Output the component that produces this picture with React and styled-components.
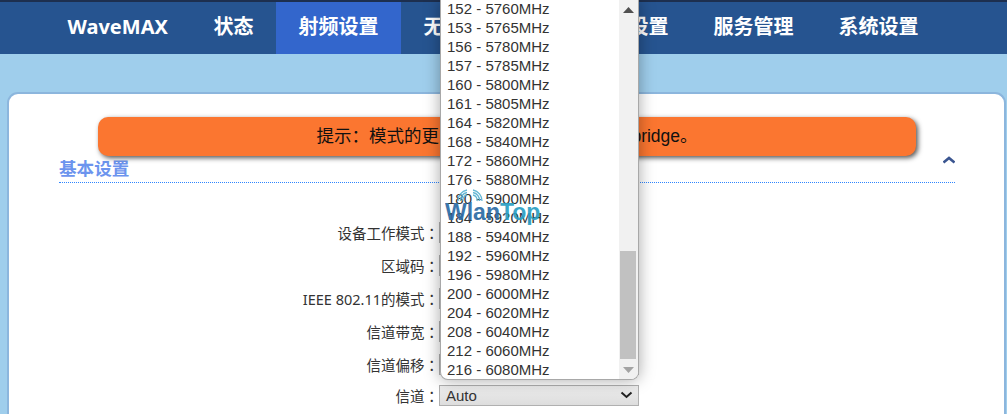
import React from 'react';
import styled, { createGlobalStyle } from 'styled-components';

const Global = createGlobalStyle`
   html, body {
      margin: 0;
      padding: 0;
      height: 100%;
      overflow: hidden;
      background: #9fceec;
   }
`;

const Page = styled.div`
   position: relative;
   width: 1007px;
   height: 414px;
   overflow: hidden;
   font-family: "Noto Sans", "Noto Sans CJK SC", sans-serif;
`;

const Navbar = styled.div`
   height: 52px;
   border-top: 2px solid #1d2f4f;
   padding-left: 45px;
   display: flex;
   background: #265490;
`;

const NavItem = styled.div`
   padding: 0 22.5px;
   line-height: 50px;
   font-size: 20px;
   font-weight: bold;
   color: #fff;
   white-space: nowrap;
   background: ${props => props.$active ? '#3366cc' : 'transparent'};
`;

const Brand = styled(NavItem)`
   width: 101px;
`;

const Card = styled.div`
   margin: 38px 1px 0 7px;
   height: 340px;
   box-sizing: border-box;
   padding: 61px 49px 0 50px;
   background: #fff;
   border: 2px solid #8cb6dd;
   border-bottom: 0;
   border-radius: 11px 11px 0 0;
`;

const SectionHead = styled.div`
   height: 27px;
   display: flex;
   justify-content: space-between;
   border-bottom: 1px dotted #2f86ff;
`;

const SectionTitle = styled.div`
   font-size: 17.6px;
   font-weight: bold;
   line-height: 26px;
   color: #6c94ee;
`;

const Collapse = styled.svg`
   width: 12px;
   height: 8px;
   margin-top: 1px;
`;

const Form = styled.div`
   padding-top: 33px;
   display: flex;
   flex-direction: column;
`;

const Row = styled.div`
   height: ${props => props.$last ? '28px' : '33px'};
   display: grid;
   grid-template-columns: 380px 200px;
   align-items: center;
`;

const Label = styled.div`
   font-size: 14.5px;
   text-align: right;
   color: #333;
   white-space: nowrap;
`;

const Colon = styled.span`
   font-family: "Noto Sans CJK TC", sans-serif;
`;

const SelectBox = styled.div`
   height: 21px;
   box-sizing: border-box;
   padding: 0 5px 0 6px;
   display: flex;
   align-items: center;
   justify-content: space-between;
   border: 1px solid #b0b0b0;
   background: linear-gradient(#eee, #ddd);
   font-family: "Liberation Sans", sans-serif;
   font-size: 15px;
   color: #333;
`;

const Notice = styled.div`
   position: absolute;
   left: 98px;
   top: 117px;
   width: 818px;
   height: 39px;
   line-height: 39px;
   text-align: center;
   font-family: "Liberation Sans", "Noto Sans CJK SC", sans-serif;
   font-size: 17.5px;
   color: #111;
   background: #fb7630;
   border-radius: 10px;
   box-shadow: 2px 2px 5px #555;
`;

const Dropdown = styled.div`
   position: absolute;
   left: 440px;
   top: 0;
   width: 199px;
   height: 380px;
   box-sizing: border-box;
   display: flex;
   overflow: hidden;
   background: #fff;
   border: 1px solid #a8a8a8;
   border-top: 0;
   border-radius: 0 0 8px 8px;
   box-shadow: 0 0 16px rgba(0,0,0,.35);
`;

const OptionList = styled.div`
   flex: 1;
   margin-top: -1px;
   font-family: "Liberation Sans", sans-serif;
   font-size: 15px;
   color: #333;
`;

const Option = styled.div`
   height: 19px;
   line-height: 19px;
   padding-left: 6px;
   white-space: nowrap;
`;

const Scrollbar = styled.div`
   width: 19px;
   display: flex;
   flex-direction: column;
   align-items: center;
   background: #f1f1f1;
`;

const ScrollArrow = styled.div`
   height: 19px;
   display: flex;
   align-items: center;
   justify-content: center;
`;

const Track = styled.div`
   flex: 1;
   width: 100%;
   padding-top: 232px;
   padding-bottom: 1px;
   box-sizing: border-box;
   display: flex;
`;

const Thumb = styled.div`
   flex: 1;
   margin: 0 2px 0 1px;
   background: #c1c1c1;
`;

const Watermark = styled.div`
   position: absolute;
   left: 445px;
   top: 189px;
   width: 98px;
   font-family: "Liberation Sans", sans-serif;
   font-size: 23px;
   font-weight: bold;
   line-height: 20px;
   white-space: nowrap;
   opacity: .92;
`;

const WaveIcon = styled.svg`
   display: block;
   width: 26px;
   height: 13px;
   margin-left: 12px;
`;

const Wlan = styled.span`
   color: #2c6ca6;
`;

const Top = styled.span`
   color: #2a9fc4;
`;

const channels = [
   [152, 5760], [153, 5765], [156, 5780], [157, 5785], [160, 5800],
   [161, 5805], [164, 5820], [168, 5840], [172, 5860], [176, 5880],
   [180, 5900], [184, 5920], [188, 5940], [192, 5960], [196, 5980],
   [200, 6000], [204, 6020], [208, 6040], [212, 6060], [216, 6080],
];

const fields = ['设备工作模式', '区域码', 'IEEE 802.11的模式', '信道带宽', '信道偏移'];

function Chevron() {
   return (
      <svg width="13" height="8" viewBox="0 0 13 8">
         <path d="M1.5 1.5 L6.5 6 L11.5 1.5" fill="none" stroke="#222" strokeWidth="2" />
      </svg>
   );
}

export default function App() {
   return (
      <Page>
         <Global />
         <Navbar>
            <Brand>WaveMAX</Brand>
            <NavItem>状态</NavItem>
            <NavItem $active>射频设置</NavItem>
            <NavItem>无线设置</NavItem>
            <NavItem>网络接口设置</NavItem>
            <NavItem>服务管理</NavItem>
            <NavItem>系统设置</NavItem>
         </Navbar>
         <Card>
            <SectionHead>
               <SectionTitle>基本设置</SectionTitle>
               <Collapse viewBox="0 0 12 8">
                  <path d="M.5 6.5 L6 2 L11.5 6.5" fill="none" stroke="#3a5590" strokeWidth="2.6" />
               </Collapse>
            </SectionHead>
            <Form>
               {fields.map(f => (
                  <Row key={f}>
                     <Label>{f}<Colon>：</Colon></Label>
                     <SelectBox />
                  </Row>
               ))}
               <Row $last>
                  <Label>信道<Colon>：</Colon></Label>
                  <SelectBox>
                     Auto
                     <Chevron />
                  </SelectBox>
               </Row>
            </Form>
         </Card>
         <Notice>提示：模式的更改将重置配置，默认模式bridge。</Notice>
         <Dropdown>
            <OptionList>
               {channels.map(([ch, mhz]) => (
                  <Option key={ch}>{ch} - {mhz}MHz</Option>
               ))}
            </OptionList>
            <Scrollbar>
               <ScrollArrow>
                  <svg width="11" height="6" viewBox="0 0 11 6"><path d="M0 6 L5.5 0 L11 6 Z" fill="#505050" /></svg>
               </ScrollArrow>
               <Track><Thumb /></Track>
               <ScrollArrow>
                  <svg width="11" height="6" viewBox="0 0 11 6"><path d="M0 0 L5.5 6 L11 0 Z" fill="#a3a3a3" /></svg>
               </ScrollArrow>
            </Scrollbar>
         </Dropdown>
         <Watermark>
            <WaveIcon viewBox="0 0 26 13" fill="none" stroke="#58b2d2" strokeWidth="1.3">
               <path d="M6 12 A5 5 0 0 1 10 6" />
               <path d="M3.5 12 A8 8 0 0 1 10 3.5" />
               <path d="M1 12 A11 11 0 0 1 10 1" />
               <path d="M20 12 A5 5 0 0 0 16 6" />
               <path d="M22.5 12 A8 8 0 0 0 16 3.5" />
               <path d="M25 12 A11 11 0 0 0 16 1" />
            </WaveIcon>
            <Wlan>Wlan</Wlan><Top>Top</Top>
         </Watermark>
      </Page>
   );
}
